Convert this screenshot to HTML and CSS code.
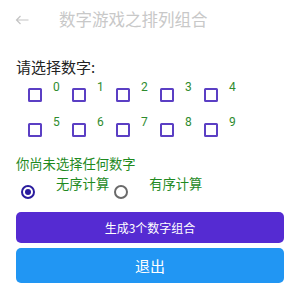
FILE: index.html
```html
<!DOCTYPE html>
<html lang="zh">
<head>
<meta charset="utf-8">
<link rel="stylesheet" href="styles.css">
</head>
<body>
<div class="header">
  <svg class="back" width="14" height="10" viewBox="0 0 14 10"><path d="M13.5 5H1.5M5.5 1L1.5 5L5.5 9" fill="none" stroke="#c4c4c4" stroke-width="1.2"/></svg>
  <div class="title">数字游戏之排列组合</div>
</div>
<div class="content">
  <div class="prompt">请选择数字:</div>
  <div class="grid">
    <div class="row">
      <div class="cell"><span class="box"></span><span class="digit">0</span></div>
      <div class="cell"><span class="box"></span><span class="digit">1</span></div>
      <div class="cell"><span class="box"></span><span class="digit">2</span></div>
      <div class="cell"><span class="box"></span><span class="digit">3</span></div>
      <div class="cell"><span class="box"></span><span class="digit">4</span></div>
    </div>
    <div class="row">
      <div class="cell"><span class="box"></span><span class="digit">5</span></div>
      <div class="cell"><span class="box"></span><span class="digit">6</span></div>
      <div class="cell"><span class="box"></span><span class="digit">7</span></div>
      <div class="cell"><span class="box"></span><span class="digit">8</span></div>
      <div class="cell"><span class="box"></span><span class="digit">9</span></div>
    </div>
  </div>
  <div class="status">你尚未选择任何数字</div>
  <div class="radios">
    <span class="radio on"></span><span class="rlabel first">无序计算</span>
    <span class="radio"></span><span class="rlabel">有序计算</span>
  </div>
  <div class="btn gen">生成3个数字组合</div>
  <div class="btn quit">退出</div>
</div>
</body>
</html>
```
FILE: styles.css
```css
body {
  margin: 0;
  width: 300px;
  background: #fff;
  font-family: "Noto Sans CJK SC", "Noto Sans", sans-serif;
}
.header {
  height: 38px;
  display: flex;
  align-items: center;
  padding-left: 15px;
}
.back {
  display: block;
  margin-top: 1px;
}
.title {
  margin-left: 30px;
  font-size: 16.5px;
  color: #c8c8c8;
  line-height: 20px;
}
.content {
  padding: 0 16px;
}
.prompt {
  margin-top: 19px;
  font-size: 15px;
  line-height: 20px;
  color: #222;
}
.grid {
  margin-top: 3px;
  padding-left: 12px;
}
.row {
  display: flex;
  height: 35px;
}
.cell {
  width: 44px;
  display: flex;
  align-items: flex-start;
}
.box {
  width: 10px;
  height: 10px;
  border: 2px solid #5b3fc4;
  border-radius: 1.5px;
  margin-top: 8px;
}
.digit {
  margin-left: 11px;
  font-family: "Roboto", "Noto Sans", sans-serif;
  font-size: 12px;
  line-height: 14px;
  color: #2e8b2e;
}
.status {
  margin-top: 5px;
  font-size: 13.3px;
  line-height: 17px;
  color: #1f8a1f;
}
.radios {
  margin-top: 3px;
  display: flex;
  align-items: flex-start;
  padding-left: 5px;
}
.radio {
  box-sizing: border-box;
  width: 14px;
  height: 14px;
  border-radius: 50%;
  border: 2px solid #6a6a6a;
  margin-top: 10px;
  display: flex;
  align-items: center;
  justify-content: center;
}
.radio.on {
  border-color: #2a1c9e;
}
.radio.on::after {
  content: "";
  width: 6px;
  height: 6px;
  border-radius: 50%;
  background: #2a1c9e;
}
.rlabel {
  font-size: 13.3px;
  line-height: 17px;
  color: #1f8a1f;
  margin-left: 21px;
}
.rlabel.first {
  margin-right: 5px;
}
.btn {
  display: flex;
  align-items: center;
  justify-content: center;
  color: #fff;
  border-radius: 5px;
}
.gen {
  margin-top: 13px;
  height: 31px;
  background: #552bd2;
  font-size: 12px;
}
.quit {
  margin-top: 5px;
  height: 35px;
  background: #2196f3;
  font-size: 15px;
}
```
